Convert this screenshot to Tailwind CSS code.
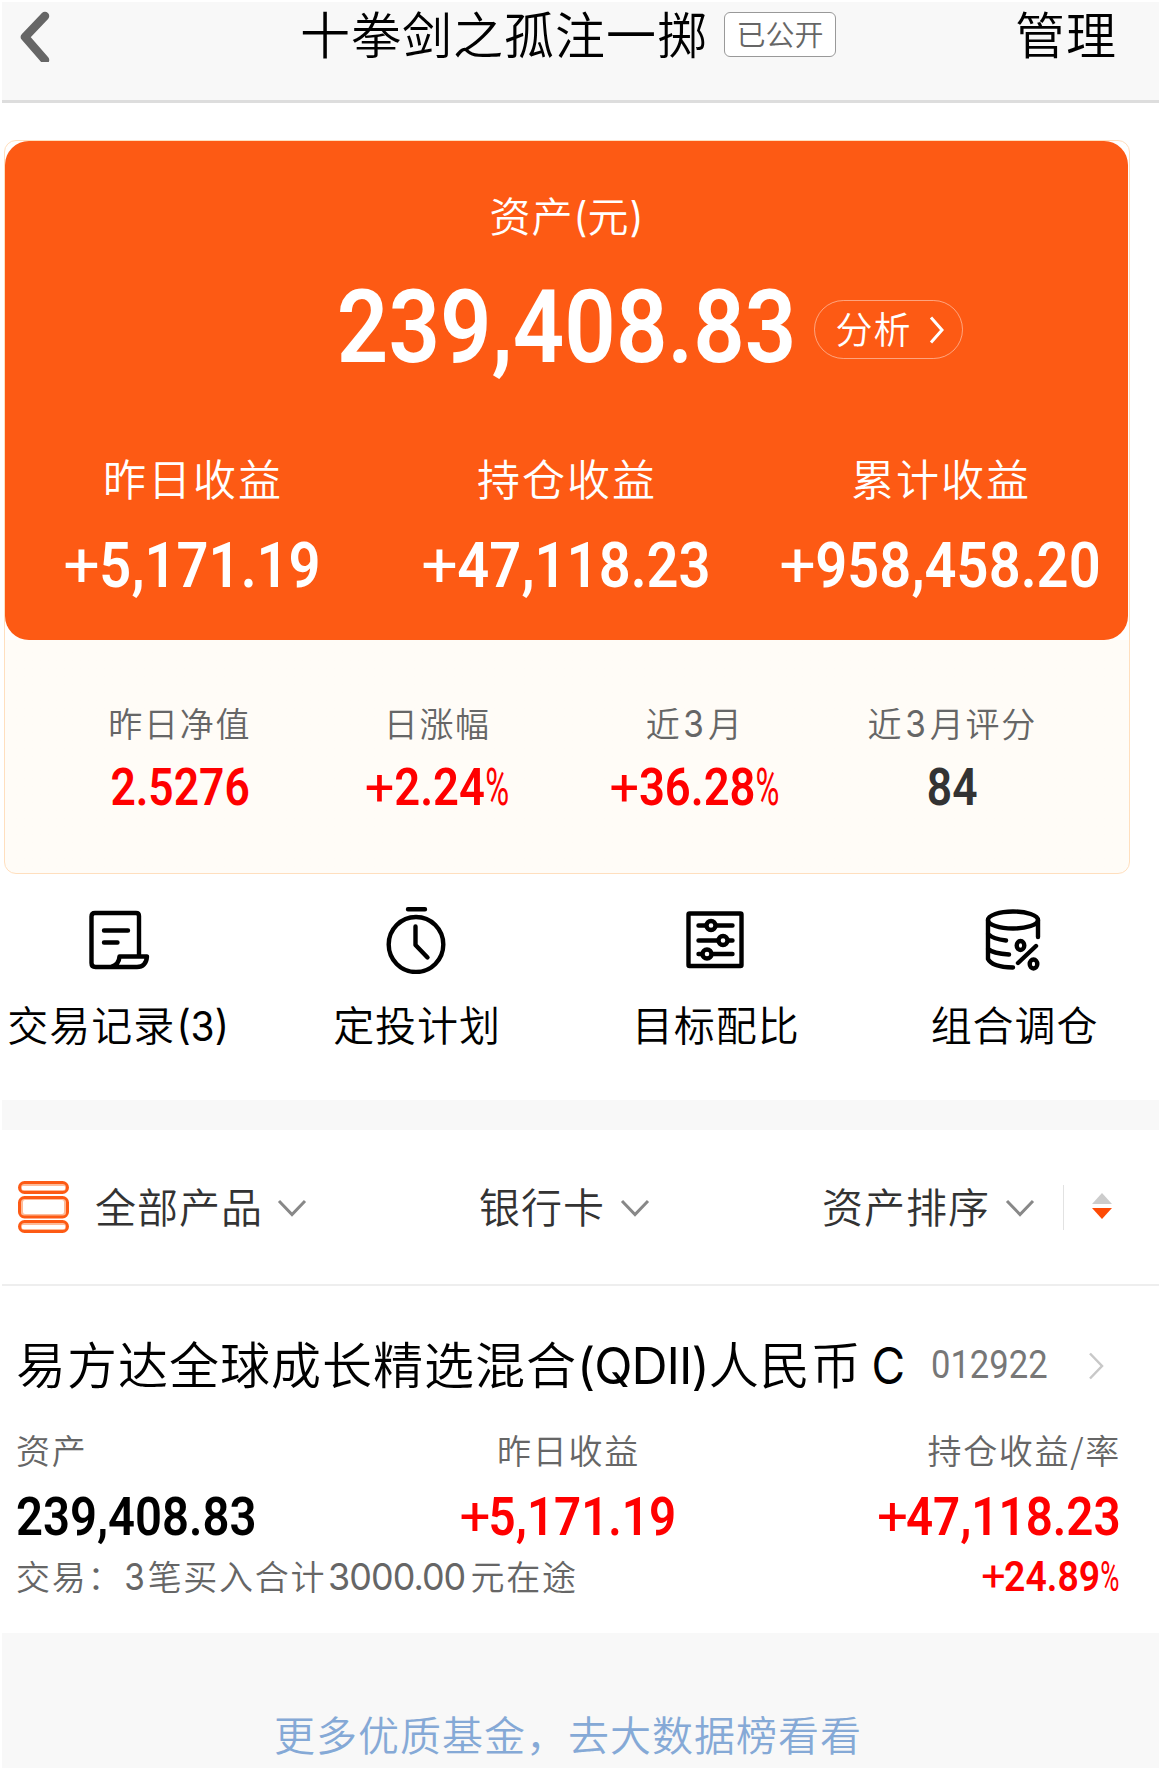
<!DOCTYPE html>
<html lang="zh-CN">
<head>
<meta charset="utf-8">
<title>十拳剑之孤注一掷</title>
<script src="https://cdn.jsdelivr.net/npm/@tailwindcss/browser@4"></script>
</head>
<body class="bg-white w-[1161px] h-[1768px] overflow-hidden px-[2px] pt-[2px] font-['Noto_Sans_CJK_SC_DemiLight','Noto_Sans_CJK_SC',sans-serif] text-black whitespace-nowrap">

  <header class="h-[101px] bg-[#f8f8f8] border-b-[3px] border-[#dddddd] flex items-start pl-[17px] pr-[43px]">
    <svg class="w-8 h-[52px] mt-2" viewBox="0 0 32 52" fill="none" stroke="#666" stroke-width="8.500" stroke-linecap="round" stroke-linejoin="round"><path d="M26 6L6 27L26 50"/></svg>
    <h1 class="ml-[249px] h-[60px] leading-[60px] text-[50px] tracking-[1px]">十拳剑之孤注一掷</h1>
    <span class="ml-[16px] mt-[10px] w-[112px] h-[45px] rounded-md border border-[#999] bg-white text-[#666] text-[29px] leading-[40px] text-center">已公开</span>
    <button class="ml-auto h-[60px] leading-[60px] text-[50px] tracking-[1px] -mr-[1px]">管理</button>
  </header>

  <section class="mt-[37px] ml-[2px] w-[1126px] h-[734px] rounded-[12px] border border-[#ffdfbe] bg-linear-to-b from-white from-[499px] to-[#fffcf7] to-[499px]">
    <div class="h-[499px] w-[1123px] rounded-[24px] bg-[#fd5a14] text-white pt-[52px]">
      <div class="h-11 leading-[43px] text-[41px] tracking-[1px] text-center">资产<span class="font-['Inter'] inline-block scale-x-90 -mx-px">(</span>元<span class="font-['Inter'] inline-block scale-x-90 -mx-px">)</span></div>
      <div class="mt-12 h-[84px] grid grid-cols-[1fr_450px_1fr] items-center">
        <div class="col-start-2 flex justify-center leading-[84px]"><span class="font-['Roboto'] font-semibold text-[102px] scale-x-[0.885]">239,408.83</span></div>
        <button class="ml-[22px] mt-[5px] w-[149px] h-[59px] rounded-full border border-white/45 flex items-center pl-[21px]">
          <span class="text-[37px] leading-[50px] mb-1 tracking-[1px]">分析</span>
          <svg class="ml-[16px] w-5 h-8" viewBox="0 0 20 32" fill="none" stroke="#fff" stroke-width="3"><path d="M3 3.500L14 16L3 28.500"/></svg>
        </button>
      </div>
      <div class="mt-[85px] ml-px grid grid-cols-3 text-center">
        <div><div class="h-[46px] leading-[46px] text-[43px] tracking-[2px]">昨日收益</div><div class="mt-[36px] h-[60px] leading-[60px] flex justify-center"><span class="font-['Roboto'] font-semibold text-[63px] scale-x-[0.89]"><span class="inline-block font-normal scale-x-[1.15] mr-[2px]">+</span>5,171.19</span></div></div>
        <div><div class="h-[46px] leading-[46px] text-[43px] tracking-[2px]">持仓收益</div><div class="mt-[36px] h-[60px] leading-[60px] flex justify-center"><span class="font-['Roboto'] font-semibold text-[63px] scale-x-[0.89]"><span class="inline-block font-normal scale-x-[1.15] mr-[2px]">+</span>47,118.23</span></div></div>
        <div><div class="h-[46px] leading-[46px] text-[43px] tracking-[2px]">累计收益</div><div class="mt-[36px] h-[60px] leading-[60px] flex justify-center"><span class="font-['Roboto'] font-semibold text-[63px] scale-x-[0.89]"><span class="inline-block font-normal scale-x-[1.15] mr-[2px]">+</span>958,458.20</span></div></div>
      </div>
    </div>
    <div class="pt-[65px] pl-[46px] w-[1076px] grid grid-cols-4 text-center">
      <div><div class="h-9 leading-[36px] text-[34px] tracking-[1.700px] text-[#666]">昨日净值</div><div class="mt-[23px] h-12 leading-[48px] flex justify-center text-[#f00]"><span class="font-['Roboto'] font-semibold text-[51px] scale-x-[0.87]">2.5276</span></div></div>
      <div><div class="h-9 leading-[36px] text-[34px] tracking-[1.700px] text-[#666]">日涨幅</div><div class="mt-[23px] h-12 leading-[48px] flex justify-center text-[#f00]"><span class="font-['Roboto'] font-semibold text-[51px] scale-x-[0.89]"><span class="inline-block font-normal scale-x-[1.15] mr-[2px]">+</span>2.24<span class="inline-block font-normal origin-left scale-x-[0.72] -mr-[11px]">%</span></span></div></div>
      <div><div class="h-9 leading-[36px] text-[34px] tracking-[1.700px] text-[#666]">近<span class="font-['Inter'] text-[37px] mx-px inline-block scale-x-[0.9]">3</span>月</div><div class="mt-[23px] h-12 leading-[48px] flex justify-center text-[#f00]"><span class="font-['Roboto'] font-semibold text-[51px] scale-x-[0.89]"><span class="inline-block font-normal scale-x-[1.15] mr-[2px]">+</span>36.28<span class="inline-block font-normal origin-left scale-x-[0.72] -mr-[11px]">%</span></span></div></div>
      <div><div class="h-9 leading-[36px] text-[34px] tracking-[1.700px] text-[#666]">近<span class="font-['Inter'] text-[37px] mx-px inline-block scale-x-[0.9]">3</span>月评分</div><div class="mt-[23px] h-12 leading-[48px] flex justify-center text-[#333]"><span class="font-['Roboto'] font-semibold text-[51px] scale-x-[0.87]">84</span></div></div>
    </div>
  </section>

  <nav class="mt-8 -ml-[33px] w-[1195px] h-[194px] grid grid-cols-4 text-center text-[41px] leading-[42px] tracking-[1px]">
    <a class="flex flex-col items-center pl-px"><svg class="w-[68px] h-[68px]" viewBox="0 0 68 68" fill="none" stroke="#000" stroke-width="4.400" stroke-linecap="round" stroke-linejoin="round"><path d="M54 49V10Q54 7 51 7H10Q6.500 7 6.500 10.500V57Q6.500 61 10.500 61H52Q61 61 62 50.500H34.500Q34 59 26 61M19 24.500H43M19 36.500H32.500"/></svg><span class="mt-[28px]">交易记录<span class="font-['Inter'] inline-block scale-x-[0.95] tracking-normal">(3)</span></span></a>
    <a class="flex flex-col items-center"><svg class="w-[68px] h-[68px]" viewBox="0 0 68 68" fill="none" stroke="#000" stroke-width="4.400" stroke-linecap="round" stroke-linejoin="round"><ellipse cx="33" cy="38.500" rx="27.300" ry="27.500"/><path d="M25 3.300H42M32.500 20.500V39L44.500 51.500"/></svg><span class="mt-[28px]">定投计划</span></a>
    <a class="flex flex-col items-center"><svg class="w-[68px] h-[68px]" viewBox="0 0 68 68" fill="none" stroke="#000" stroke-width="4.400" stroke-linecap="round" stroke-linejoin="round"><rect x="6.500" y="7.500" width="53" height="52.500" rx="1"/><path d="M16.500 19.500H24M34 19.500H50.500M16.500 34.500H36M46.500 34.500H50.500M16.500 48H20M30.500 48H50.500"/><circle cx="29" cy="19.500" r="4.500"/><circle cx="41" cy="34.500" r="4.500"/><circle cx="25" cy="48" r="4.500"/></svg><span class="mt-[28px]">目标配比</span></a>
    <a class="flex flex-col items-center"><svg class="w-[68px] h-[68px]" viewBox="0 0 68 68" fill="none" stroke="#000" stroke-width="4.400" stroke-linecap="round" stroke-linejoin="round"><ellipse cx="32" cy="14" rx="25" ry="8.500"/><path d="M7 14V53Q11 61 32 61.500M57 14V31M7 28Q12 33 25 34.500M7 43Q12 47.500 28 48.500M55 40L37 57"/><ellipse cx="39.500" cy="39.500" rx="3.800" ry="4.500"/><ellipse cx="52.500" cy="58" rx="3.800" ry="4.500"/></svg><span class="mt-[28px]">组合调仓</span></a>
  </nav>

  <div class="h-[30px] bg-[#f8f8f8]"></div>

  <div class="h-[156px] border-b-2 border-[#eeeeee] flex items-center text-[#333] text-[41px] leading-[42px] tracking-[1px] pl-[15px]">
    <svg class="w-[53px] h-[53px] shrink-0" viewBox="0 0 53 53" fill="none" stroke-width="3"><g stroke="#fdbb99" stroke-width="2"><rect x="4" y="4" width="45" height="6" rx="2"/><rect x="5" y="18" width="43" height="16" rx="3"/><rect x="4" y="43" width="45" height="6" rx="2"/></g><g stroke="#fd5a14"><rect x="2.500" y="1.500" width="48" height="10" rx="5"/><rect x="2.500" y="16.500" width="48" height="19.500" rx="5"/><rect x="2.500" y="40.500" width="48" height="10" rx="5"/></g></svg>
    <span class="ml-[25px] mb-1">全部产品</span>
    <svg class="ml-[13px] w-8 h-5 mt-px" viewBox="0 0 32 20" fill="none" stroke="#888" stroke-width="3"><path d="M3 3L16 16.500L29 3"/></svg>
    <span class="ml-[171px] mb-1">银行卡</span>
    <svg class="ml-[14px] w-8 h-5 mt-px" viewBox="0 0 32 20" fill="none" stroke="#888" stroke-width="3"><path d="M3 3L16 16.500L29 3"/></svg>
    <span class="ml-[171px] mb-1">资产排序</span>
    <svg class="ml-[14px] w-8 h-5 mt-px" viewBox="0 0 32 20" fill="none" stroke="#888" stroke-width="3"><path d="M3 3L16 16.500L29 3"/></svg>
    <div class="ml-[27px] w-px h-[45px] bg-[#e2e2e2]"></div>
    <svg class="ml-[27px] w-[22px] h-7" viewBox="0 0 22 28"><path d="M11 0L21 11H1Z" fill="#ccc"/><path d="M1 15H21L11 26Z" fill="#fd4a05"/></svg>
  </div>

  <section class="pt-[48px] px-[14px]">
    <div class="flex items-center h-[60px] leading-[60px]">
      <h2 class="w-[891px] text-[50px] tracking-[1px]">易方达全球成长精选混合<span class="font-['Inter'] tracking-[-1px]">(QDII)</span>人民币<span class="ml-[8px] font-['Inter'] inline-block scale-x-[0.92]">C</span></h2>
      <span class="ml-6 mt-[1px] font-['Roboto'] text-[38px] text-[#777] origin-left scale-x-[0.91]">012922</span>
      <svg class="ml-auto mr-[39px] w-5 h-8 mt-1" viewBox="0 0 20 32" fill="none" stroke="#c8c8c8" stroke-width="2.500"><path d="M4 3.500L16 16L4 28.500"/></svg>
    </div>
    <div class="mt-[38px] grid grid-cols-3 w-[1105px] text-[34px] leading-[36px] tracking-[1.700px] text-[#666]">
      <div>资产</div><div class="text-center">昨日收益</div><div class="text-right">持仓收益/率</div>
    </div>
    <div class="mt-[25px] grid grid-cols-3 w-[1105px] h-12 leading-[48px] font-['Roboto'] font-semibold text-[54px] text-[#f00]">
      <div class="flex"><span class="origin-left scale-x-[0.875] text-black">239,408.83</span></div>
      <div class="flex justify-center"><span class="scale-x-[0.88]"><span class="inline-block font-normal scale-x-[1.15]">+</span>5,171.19</span></div>
      <div class="flex justify-end"><span class="origin-right scale-x-[0.88]"><span class="inline-block font-normal scale-x-[1.15]">+</span>47,118.23</span></div>
    </div>
    <div class="mt-[17px] h-9 w-[1104px] flex justify-between leading-[36px]">
      <span class="text-[34px] tracking-[1.700px] text-[#666]">交易：<span class="font-['Inter'] text-[37px] inline-block scale-x-[0.9]">3</span>笔买入合计<span class="font-['Inter'] text-[37px] tracking-[-1px] inline-block scale-x-[0.97] mr-[3px]">3000.00</span>元在途</span>
      <span class="mt-px font-['Roboto'] font-semibold text-[42px] text-[#f00] origin-right scale-x-[0.89]"><span class="inline-block font-normal scale-x-[1.15]">+</span>24.89<span class="inline-block font-normal origin-left scale-x-[0.7] -mr-[9px]">%</span></span>
    </div>
  </section>

  <footer class="mt-[39px] h-[135px] bg-[#f8f8f8] pt-[78px] pr-[25px] text-center text-[#85a9d6] text-[41px] leading-[44px] tracking-[1px]">更多优质基金，去大数据榜看看</footer>
</body>
</html>
